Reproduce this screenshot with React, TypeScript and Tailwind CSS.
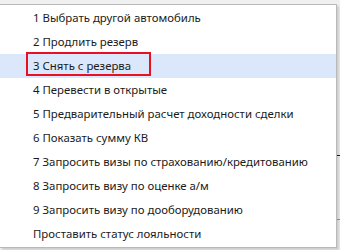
const items = [
  "1 Выбрать другой автомобиль",
  "2 Продлить резерв",
  "3 Снять с резерва",
  "4 Перевести в открытые",
  "5 Предварительный расчет доходности сделки",
  "6 Показать сумму КВ",
  "7 Запросить визы по страхованию/кредитованию",
  "8 Запросить визу по оценке а/м",
  "9 Запросить визу по дооборудованию",
  "Проставить статус лояльности",
];

export default function App() {
  return (
    <div className="flex h-[250px] w-[340px] overflow-hidden bg-[#f0f0f0] pt-[4px] font-['Noto_Sans',sans-serif] text-[11.4px] text-[#1b1b1b]">
      <div className="h-[244px] w-[337px] shrink-0 border-y border-r border-[#b9b9b9] bg-white py-px shadow-[2px_2px_2px_rgba(0,0,0,0.15)]">
        {items.map((label, i) => (
          <div
            key={label}
            className={
              i === 2
                ? "relative flex h-[24px] items-center bg-[#dbe7fa] pl-[33px]"
                : "relative flex h-[24px] items-center pl-[33px]"
            }
          >
            {label}
            {i === 2 && (
              <div className="absolute left-[26px] top-[-2px] h-[24px] w-[125px] border-2 border-[#e81123]" />
            )}
          </div>
        ))}
      </div>
      <div className="flex w-[3px] flex-col">
        <div className="h-[151px]" />
        <div className="h-px bg-[#1a1a1a]" />
        <div className="h-[63px]" />
        <div className="h-px bg-[#8a8a8a]" />
      </div>
    </div>
  );
}
